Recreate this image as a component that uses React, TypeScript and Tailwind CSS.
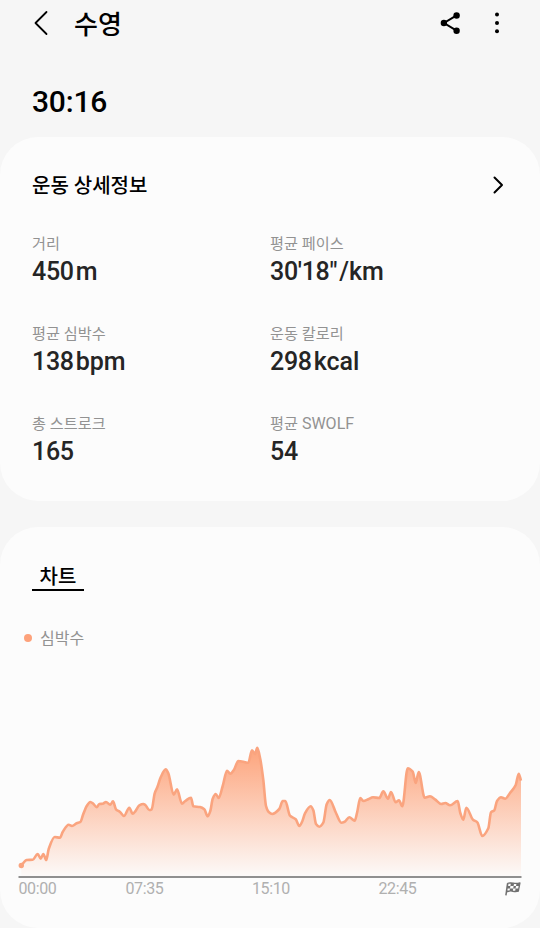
import type { ReactNode } from "react";

const STATS = [
  { label: "거리", value: "450", unit: "m" },
  { label: "평균 페이스", value: "30'18\"", unit: "/km" },
  { label: "평균 심박수", value: "138", unit: "bpm" },
  { label: "운동 칼로리", value: "298", unit: "kcal" },
  { label: "총 스트로크", value: "165" },
  { label: "평균", latin: "SWOLF", value: "54" },
];

// heart rate curve, in chart units (baseline y = 137)
const HEART_RATE: [number, number][] = [
  [21.3, 125.3], [26.7, 120], [32.7, 119.7], [37.7, 114], [40.7, 118.7], [43.3, 114], [46.3, 120],
  [48.7, 109], [54.7, 97], [60, 97.7], [62.7, 92], [68.7, 84.7], [72, 86], [76.7, 83.3], [80.3, 82],
  [83.3, 74], [86.7, 66], [90.3, 62], [93.3, 63.7], [96.7, 67.3], [99.3, 64], [102.7, 63.7],
  [106, 62], [110.3, 64.7], [113, 61.3], [116, 69.3], [120, 72], [124, 76], [129.3, 67.7],
  [132.7, 73.7], [135.3, 71.3], [139.3, 65.3], [143.3, 64], [145.3, 65], [149.3, 70], [151.7, 69.3],
  [154.7, 53.3], [157.3, 47.3], [160.7, 37.3], [165.7, 29.3], [168.3, 33.3], [173.7, 54.7],
  [177, 49.3], [182, 63.7], [185.3, 61], [191, 57.7], [193.3, 66.3], [200, 67], [204.3, 69.3],
  [207.7, 76.3], [210.3, 71], [212.7, 58.7], [215.7, 54], [218.7, 58], [222.7, 46], [227, 30.7],
  [230.3, 33.7], [234, 29.7], [238.3, 21], [243.3, 21.7], [248.3, 22.7], [252, 10.3], [255, 14],
  [257.3, 7.7], [260.3, 19.3], [263.3, 40], [266, 66], [268.7, 72], [272.3, 74], [279.3, 69],
  [282.7, 61], [285.3, 61], [290, 75.7], [295.7, 79.3], [299.3, 86], [302.3, 81.3], [305, 73.3],
  [310.7, 66.3], [313.3, 70.3], [316, 84], [319.3, 86.7], [323.3, 82.7], [326.7, 64.3], [329.7, 60],
  [336, 73], [341.3, 82.7], [344.7, 81.7], [349.3, 77.3], [354.7, 80.7], [357, 73], [360.3, 58],
  [363.3, 61], [368.3, 59.3], [373, 57.3], [379.3, 58], [383.3, 51.3], [388, 58.7], [391, 52],
  [395.7, 62.3], [399, 60.3], [402.3, 66.3], [407.7, 28.3], [412.7, 31.7], [415.7, 43], [418.7, 32],
  [424.7, 57.7], [430, 56.3], [435, 59.3], [441.3, 64], [445.3, 63], [450, 65.3], [457.7, 61],
  [460.3, 73], [463.3, 79.7], [466.3, 67.7], [473, 79.7], [477.3, 82.3], [482.3, 96], [488.3, 88.3],
  [491, 72.3], [494.3, 70.3], [497, 61], [501, 57.3], [505.3, 58.7], [510, 53], [515.7, 45],
  [518.7, 33.7], [521, 40.7],
];

// monotone cubic path, so peaks are rounded but never overshoot
function smoothPath(pts: [number, number][]) {
  const slope = (i: number) => (pts[i + 1][1] - pts[i][1]) / (pts[i + 1][0] - pts[i][0]);
  const tangents = pts.map((_, i) => {
    if (i === 0) return slope(0);
    if (i === pts.length - 1) return slope(i - 1);
    const a = slope(i - 1);
    const b = slope(i);
    return a * b <= 0 ? 0 : (2 * a * b) / (a + b);
  });
  let d = `M${pts[0][0]} ${pts[0][1]}`;
  for (let i = 1; i < pts.length; i++) {
    const [x0, y0] = pts[i - 1];
    const [x1, y1] = pts[i];
    const h = (x1 - x0) / 3;
    d += `C${x0 + h} ${y0 + tangents[i - 1] * h} ${x1 - h} ${y1 - tangents[i] * h} ${x1} ${y1}`;
  }
  return d;
}

const LINE = smoothPath(HEART_RATE);

function Card({ className, children }: { className: string; children: ReactNode }) {
  return <section className={`rounded-[38px] bg-[#fcfcfc] ${className}`}>{children}</section>;
}

function Chart() {
  return (
    <svg viewBox="0 0 540 140" className="block h-[140px] w-full" fill="none">
      <defs>
        <linearGradient id="hr" gradientUnits="userSpaceOnUse" x1="0" y1="8" x2="0" y2="137">
          <stop offset="0" stopColor="#fda47c" />
          <stop offset="1" stopColor="#fda47c" stopOpacity="0.02" />
        </linearGradient>
      </defs>
      <path d={`${LINE}V137H21.3Z`} fill="url(#hr)" />
      <path d={LINE} stroke="#faa47f" strokeWidth="2.6" strokeLinejoin="round" />
      <circle cx="21.3" cy="125.5" r="2.7" fill="#faa47f" />
      <path d="M18.5 137H521.5" stroke="#8f8f8f" strokeWidth="1.8" />
    </svg>
  );
}

function FinishFlag() {
  return (
    <svg viewBox="0 0 16 14" className="h-[14px] w-4" fill="none">
      <path
        d="M2.8 1.4C5 .4 6.5.8 8.5 1.200S12.500 1.600 15 .9L13.400 9.200C11 10 9.800 9.800 8 9.300S4.500 8.800 2.200 9.800Z"
        fill="#707070"
        stroke="#707070"
        strokeWidth="1.2"
        strokeLinejoin="round"
      />
      <path d="M2.600 1.400L.9 13.400" stroke="#707070" strokeWidth="1.5" />
      <path
        d="M3.500 1.800h2.300l-.4 2.100H3.100zM9 1.900h2.400L11 4.100H8.600zM5.400 3.900h3.200l-.4 2.500H5zM11 4.100h2.600l-.4 2.300h-2.600zM2.700 6.400H5l-.4 2H2.400zM8.200 6.400h2.400l-.4 2.400H7.900z"
        fill="#fcfcfc"
      />
    </svg>
  );
}

export default function App() {
  return (
    <div className="h-[928px] w-[540px] overflow-hidden bg-[#f6f6f6] font-['Roboto','Noto_Sans_CJK_KR',sans-serif] text-black">
      <header className="flex h-[46px] items-center pr-10 pl-[34px]">
        <svg viewBox="0 0 14 26" className="h-[26px] w-[14px]" fill="none">
          <path d="M12.5 2L1.5 13l11 11" stroke="black" strokeWidth="1.8" strokeLinecap="round" strokeLinejoin="round" />
        </svg>
        <h1 className="ml-[26px] pt-[3px] text-[26px] leading-none font-medium">수영</h1>
        <svg viewBox="0 0 20 22" className="mb-px ml-auto h-[22px] w-5" fill="none">
          <path d="M16.6 3.3L4 11l12.6 7.7" stroke="black" strokeWidth="2" />
          <circle cx="16.6" cy="3.5" r="3.2" fill="black" />
          <circle cx="3.9" cy="11" r="3.2" fill="black" />
          <circle cx="16.6" cy="18.7" r="3.2" fill="black" />
        </svg>
        <svg viewBox="0 0 6 22" className="ml-[34px] h-[22px] w-[6px]">
          <circle cx="3" cy="2.6" r="2" />
          <circle cx="3" cy="11" r="2" />
          <circle cx="3" cy="19.2" r="2" />
        </svg>
      </header>

      <p className="mt-[38px] ml-8 h-[53px] text-[30px] leading-[36px] font-medium tracking-[-0.2px]">30:16</p>

      <Card className="h-[364px] px-8 pt-[34px]">
        <div className="flex h-7 items-center justify-between">
          <h2 className="pt-0.5 text-xl leading-7 font-medium">운동 상세정보</h2>
          <svg viewBox="0 0 12 18" className="mr-1 mb-px h-[18px] w-3" fill="none">
            <path d="M2.5 1.5L10 9l-7.5 7.5" stroke="black" strokeWidth="2" strokeLinecap="round" strokeLinejoin="round" />
          </svg>
        </div>
        <dl className="mt-[33px] grid auto-rows-[90px] grid-cols-2">
          {STATS.map(({ label, latin, value, unit }) => (
            <div key={value}>
              <dt className="h-[22px] pt-px text-[15.2px] leading-[22px] text-[#929292]">
                {label}
                {latin && <span className="text-base leading-none"> {latin}</span>}
              </dt>
              <dd className="mt-[3px] flex gap-[2px] text-[25px] leading-[30px] font-medium text-[#252525]">
                <span className="tracking-[-0.3px]">{value}</span>
                {unit && <span>{unit}</span>}
              </dd>
            </div>
          ))}
        </dl>
      </Card>

      <Card className="mt-[26px] h-[401px] pt-[34px]">
        <h2 className="ml-8 h-[30px] w-[52px] border-b-2 border-black pt-0.5 text-center text-xl leading-[28px] font-medium">
          차트
        </h2>
        <div className="mt-9 ml-6 flex h-[22px] items-center gap-2 text-[#929292]">
          <span className="size-2 rounded-full bg-[#fda27b]" />
          <span className="pt-0.5 text-base leading-[22px]">심박수</span>
        </div>
        <div className="mt-[91px]">
          <Chart />
        </div>
        <div className="flex h-[18px] items-center text-base leading-[18px] tracking-[-0.4px] text-[#b0b0b0]">
          <span className="ml-[18.5px] w-[107px]">00:00</span>
          <span className="w-[126.5px]">07:35</span>
          <span className="w-[126.5px]">15:10</span>
          <span>22:45</span>
          <span className="mr-[19px] ml-auto">
            <FinishFlag />
          </span>
        </div>
      </Card>
    </div>
  );
}
